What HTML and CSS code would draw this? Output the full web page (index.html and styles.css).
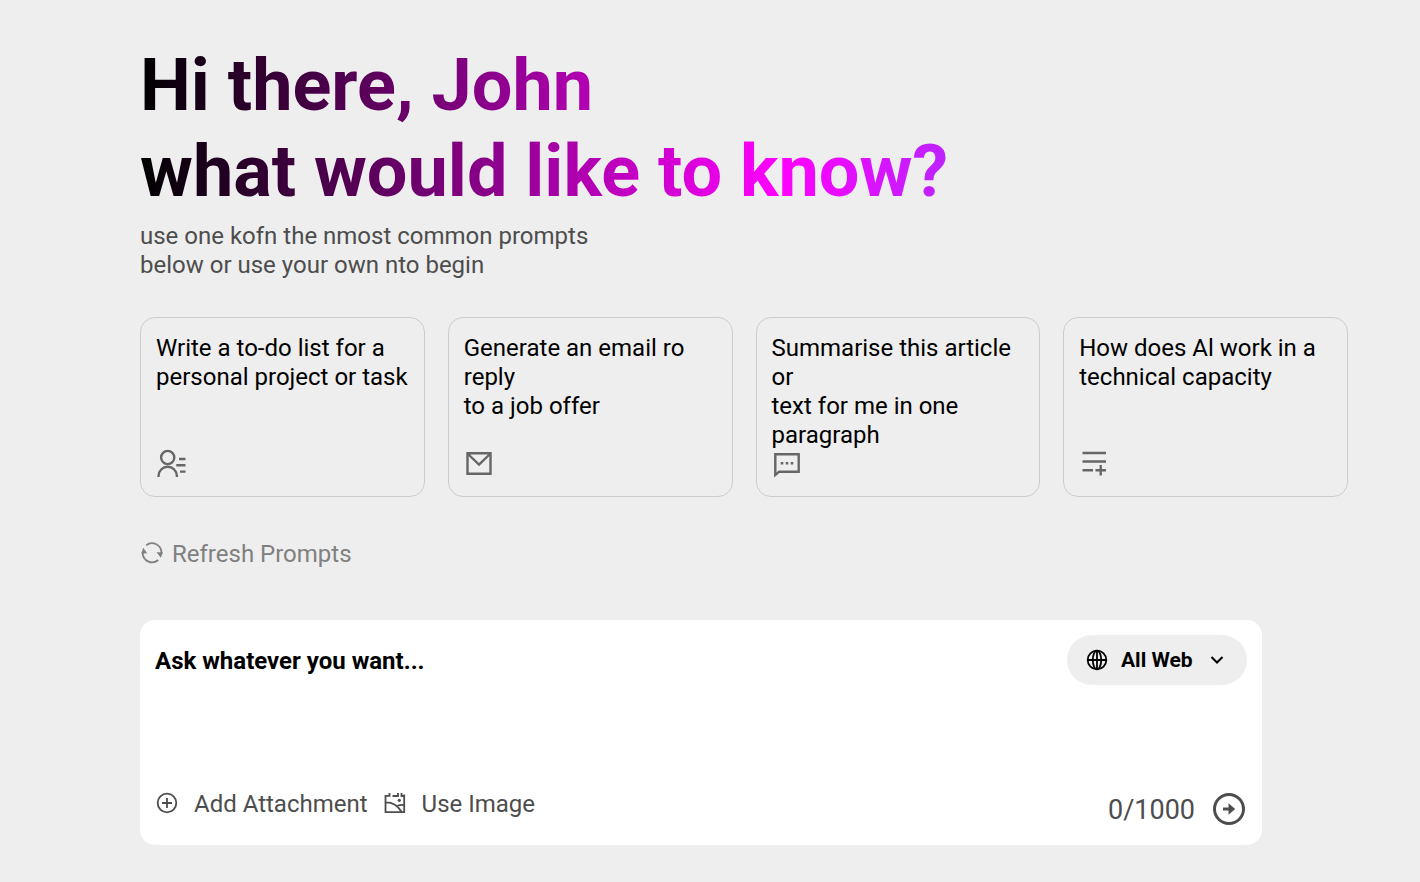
FILE: index.html
```html
<!DOCTYPE html>
<html lang="en">
<head>
<meta charset="utf-8">
<meta name="viewport" content="width=device-width, initial-scale=1">
<title>Assistant</title>
<link rel="stylesheet" href="styles.css">
</head>
<body>
<main class="page">
  <header class="intro">
    <h1 class="greeting">Hi there, John<br>what would like to know?</h1>
    <p class="hint">use one kofn the nmost common prompts<br>below or use your own nto begin</p>
  </header>

  <section class="prompts" aria-label="Common prompts">
    <button class="card" type="button">
      <span>Write a to-do list for a<br>personal project or task</span>
      <svg class="card-icon" viewBox="0 0 32 32" aria-hidden="true"><circle cx="11.7" cy="8.5" r="6.6"/><path d="M2.5 28v-1a9.2 9.2 0 0 1 18.4 0v1M23 10h6.5M20.3 16.3h9.2M24 22.6h5.5"/></svg>
    </button>
    <button class="card" type="button">
      <span>Generate an email ro reply<br>to a job offer</span>
      <svg class="card-icon" viewBox="0 0 32 32" aria-hidden="true"><path d="M3.5 4.3h23v20.4h-23zM4 5l11 10.500 11-10.500"/></svg>
    </button>
    <button class="card" type="button">
      <span>Summarise this article or<br>text for me in one paragraph</span>
      <svg class="card-icon" viewBox="0 0 32 32" aria-hidden="true"><path d="M3.300 5.300h23.400v17.400h-19.500l-3.900 3.300z"/><path d="M8.700 14.300h2.600M13.700 14.300h2.600M18.700 14.300h2.600"/></svg>
    </button>
    <button class="card" type="button">
      <span>How does Al work in a<br>technical capacity</span>
      <svg class="card-icon" viewBox="0 0 32 32" aria-hidden="true"><path d="M3.500 4h23.500M3.500 12.500h23.500M3.500 21.200h10.500M16.500 21.200h10.500M21.700 16v10.500"/></svg>
    </button>
  </section>

  <button class="refresh" type="button">
    <svg class="small-icon" viewBox="0 0 24 24" aria-hidden="true"><path d="M6.200 4.300a9.400 9.400 0 0 1 15.200 7.700M18.200 19a9.400 9.400 0 0 1-15.500-7.500"/><path class="solid" d="M16.500 11.300h6.500l-2.200 5.500zM1.200 12.700l2-6 4 5.500z"/></svg>
    Refresh Prompts
  </button>

  <form class="composer">
    <div class="composer-top">
      <textarea class="question" placeholder="Ask whatever you want..." aria-label="Your question"></textarea>
      <label class="scope">
        <svg class="small-icon" viewBox="0 0 24 24" aria-hidden="true"><circle cx="12" cy="12" r="9.300"/><ellipse cx="12" cy="12" rx="4.200" ry="9.300"/><path d="M2.700 12h18.600M12 2.700v18.600"/></svg>
        <select class="scope-select" aria-label="Search scope"><option>All Web</option></select>
        <svg class="chevron" viewBox="0 0 16 16" aria-hidden="true"><path d="M2.500 5l5.500 5.500 5.500-5.500"/></svg>
      </label>
    </div>
    <div class="composer-bottom">
      <div class="tools">
        <button class="tool" type="button">
          <svg class="small-icon" viewBox="0 0 24 24" aria-hidden="true"><circle cx="12" cy="12" r="9.300"/><path d="M12 7v10M7 12h10"/></svg>
          Add Attachment
        </button>
        <button class="tool" type="button">
          <svg class="small-icon" viewBox="0 0 24 24" aria-hidden="true"><path d="M6.500 2v2.800H2.500v16.400h18.700V3.500M18.500 2v3h2.700M9.500 5h5.500V2M2.500 11.300c7-.2 12.500 3.500 16 9.500M13 15.500c2.500-1.500 5-2 8-1.500"/><circle class="solid" cx="16.300" cy="9.300" r="1.600"/></svg>
          Use Image
        </button>
      </div>
      <div class="send-group">
        <span class="counter">0/1000</span>
        <button class="send" type="submit" aria-label="Send">
          <svg class="send-icon" viewBox="0 0 36 36" aria-hidden="true"><circle cx="18" cy="18" r="14.500"/><path d="M12 18h8"/><path class="solid" d="M17.500 12.200l6.700 5.800-6.700 5.800z"/></svg>
        </button>
      </div>
    </div>
  </form>
</main>
</body>
</html>
```
FILE: styles.css
```css
* {
  box-sizing: border-box;
}

body {
  margin: 0;
  background: #eee;
  color: #000;
  font: 24px/29px Roboto, sans-serif;
}

button,
select,
textarea {
  margin: 0;
  padding: 0;
  border: 0;
  background: none;
  color: inherit;
  font: inherit;
  text-align: left;
}

button {
  cursor: pointer;
}

svg {
  flex: none;
  fill: none;
  stroke: currentColor;
}

.solid {
  fill: currentColor;
  stroke: none;
}

.page {
  padding: 43px 0 37px 140px;
}

.greeting {
  margin: 0 0 7px;
  background: linear-gradient(90deg, #000, #f0f, #0084ff);
  background-clip: text;
  -webkit-background-clip: text;
  color: transparent;
  font-size: 72px;
  font-weight: 700;
  line-height: 86px;
}

.hint {
  margin: 0 0 37px;
  color: #4d4d4d;
}

.prompts {
  display: grid;
  grid-template-columns: repeat(4, 1fr);
  gap: 23px;
  margin: 0 72px 42px 0;
}

.card {
  display: flex;
  flex-direction: column;
  justify-content: space-between;
  min-height: 180px;
  padding: 16px 15px 14px;
  border: 1px solid #ccc;
  border-radius: 15px;
}

.card-icon {
  width: 32px;
  height: 32px;
  margin-bottom: 1px;
  color: #666;
  stroke-width: 2.4;
}

.card > span {
  margin-bottom: -1px;
}

.refresh {
  display: flex;
  align-items: center;
  gap: 8px;
  margin-bottom: 51px;
  padding-top: 1px;
  color: #808080;
}

.small-icon {
  width: 24px;
  height: 24px;
  margin-bottom: 4px;
  stroke-width: 1.8;
}

.composer {
  display: flex;
  flex-direction: column;
  justify-content: space-between;
  min-height: 225px;
  margin-right: 158px;
  padding: 15px;
  border-radius: 15px;
  background: #fff;
}

.composer-top,
.composer-bottom {
  display: flex;
  justify-content: space-between;
  align-items: flex-start;
}

.question {
  flex: 1;
  height: 96px;
  padding-top: 12px;
  outline: 0;
  resize: none;
  font-weight: 700;
}

.question::placeholder {
  color: #000;
}

.scope {
  display: flex;
  align-items: center;
  width: 180px;
  height: 50px;
  padding: 1px 22px 0 18px;
  border-radius: 25px;
  background: #eee;
}

.scope .small-icon {
  margin: 0 12px 2px 0;
}

.scope-select {
  flex: 1;
  appearance: none;
  outline: 0;
  font-size: 21px;
  font-weight: 700;
}

.chevron {
  width: 16px;
  height: 16px;
  margin-bottom: 2px;
  stroke-width: 2;
}

.composer-bottom {
  align-items: center;
  margin-bottom: 2px;
  color: #4d4d4d;
}

.tools,
.tool,
.send-group {
  display: flex;
  align-items: center;
}

.tools {
  gap: 15px;
  margin-bottom: 9px;
}

.tool {
  gap: 15px;
}

.send-group {
  gap: 16px;
}

.counter {
  padding-top: 2px;
  font-size: 27px;
}

.send {
  display: flex;
}

.send-icon {
  width: 36px;
  height: 36px;
  stroke-width: 3;
}
```
